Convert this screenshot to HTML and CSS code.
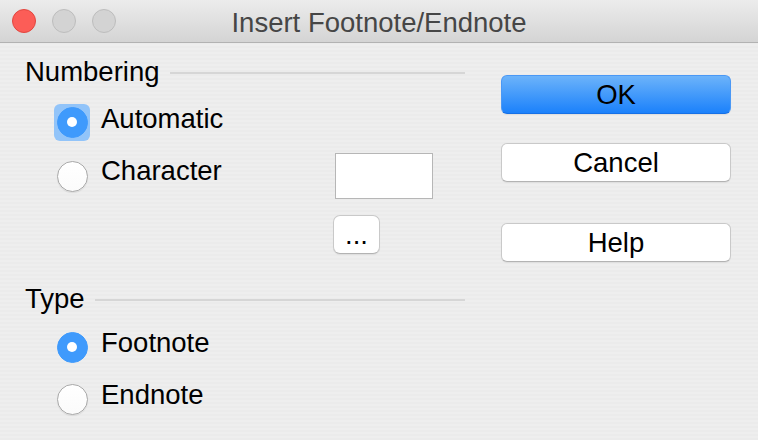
FILE: index.html
```html
<!DOCTYPE html>
<html>
<head>
<meta charset="utf-8">
<link rel="stylesheet" href="styles.css">
</head>
<body>
<div class="window">
  <div class="titlebar">
    <div class="lights">
      <span class="light close"></span>
      <span class="light"></span>
      <span class="light"></span>
    </div>
    <div class="title">Insert Footnote/Endnote</div>
    <div></div>
  </div>
  <div class="content">
    <div class="left">
      <div class="heading heading-numbering"><span>Numbering</span><span class="rule"></span></div>
      <div class="option opt-auto">
        <span class="ring focused"><span class="radio checked"></span></span>
        <span class="label">Automatic</span>
      </div>
      <div class="option opt-char">
        <span class="ring"><span class="radio"></span></span>
        <span class="label label-char">Character</span>
        <span class="charbox"></span>
      </div>
      <div class="dots-row"><button class="btn small">...</button></div>
      <div class="heading heading-type"><span>Type</span><span class="rule"></span></div>
      <div class="option opt-foot">
        <span class="ring"><span class="radio checked"></span></span>
        <span class="label">Footnote</span>
      </div>
      <div class="option opt-end">
        <span class="ring"><span class="radio"></span></span>
        <span class="label">Endnote</span>
      </div>
    </div>
    <div class="right">
      <button class="btn wide primary">OK</button>
      <button class="btn wide cancel">Cancel</button>
      <button class="btn wide help">Help</button>
    </div>
  </div>
</div>
</body>
</html>
```
FILE: styles.css
```css
html, body {
  margin: 0;
  padding: 0;
}
body {
  width: 758px;
  height: 440px;
  overflow: hidden;
  font-family: "Liberation Sans", Arial, sans-serif;
  font-size: 27.5px;
  color: #000;
}
.window {
  width: 758px;
  height: 440px;
  background: repeating-linear-gradient(to bottom, #eeeeee 0px, #eeeeee 2px, #ebebeb 2px, #ebebeb 4px);
}
.titlebar {
  height: 42px;
  border-bottom: 1px solid #b2b2b2;
  background: linear-gradient(to bottom, #ececec, #d4d4d4);
  display: grid;
  grid-template-columns: 1fr auto 1fr;
  align-items: center;
}
.lights {
  display: flex;
  gap: 16px;
  padding-left: 12px;
}
.light {
  width: 22px;
  height: 22px;
  border-radius: 50%;
  background: #d3d3d3;
  border: 1px solid #bdbdbd;
}
.light.close {
  background: #fc5d57;
  border-color: #e2463f;
}
.title {
  color: #464646;
  padding-top: 3px;
  line-height: 39px;
}
.content {
  display: flex;
}
.left {
  width: 440px;
  padding-left: 25px;
  padding-top: 13px;
  display: flex;
  flex-direction: column;
}
.heading {
  display: flex;
  align-items: center;
  height: 32px;
  line-height: 32px;
}
.heading .rule {
  flex: 1;
  height: 2px;
  background: #d6d6d6;
  margin-left: 10px;
  margin-top: 1px;
}
.heading-type {
  margin-top: 29px;
}
.option {
  display: flex;
  align-items: center;
  height: 36px;
}
.opt-auto { margin-top: 16px; }
.opt-char { margin-top: 13px; height: 46px; }
.opt-foot { margin-top: 14px; }
.opt-end { margin-top: 16px; }
.ring {
  width: 36px;
  height: 37px;
  margin-left: 29px;
  border-radius: 6px;
  display: flex;
  align-items: center;
  justify-content: center;
}
.ring.focused {
  background: #92c4f9;
}
.radio {
  width: 29px;
  height: 29px;
  border-radius: 50%;
  background: linear-gradient(to bottom, #ffffff, #fbfbfb);
  border: 1px solid #a9a9a9;
  box-shadow: 0 1px 1px rgba(0,0,0,0.08);
  display: flex;
  align-items: center;
  justify-content: center;
}
.radio.checked {
  background: #3f9afc;
  border-color: #3f9afc;
  box-shadow: none;
}
.radio.checked::after {
  content: "";
  width: 10px;
  height: 10px;
  border-radius: 50%;
  background: #fff;
}
.label {
  margin-left: 11px;
  padding-bottom: 8px;
}
.opt-auto .label {
  padding-bottom: 6px;
}
.label-char {
  width: 234px;
  padding-bottom: 10px;
}
.charbox {
  width: 96px;
  height: 44px;
  background: #fff;
  border: 1px solid #b6b6b6;
}
.dots-row {
  margin-top: 16px;
  padding-left: 308px;
}
.btn {
  font-family: "Liberation Sans", Arial, sans-serif;
  font-size: 27.5px;
  color: #000;
  background: #fff;
  border: 1px solid #c9c9c9;
  border-bottom-color: #b3b3b3;
  border-radius: 6px;
  box-shadow: 0 1px 1px rgba(0,0,0,0.06);
  padding: 0;
  display: flex;
  align-items: center;
  justify-content: center;
}
.btn.small {
  width: 47px;
  height: 39px;
  border-radius: 7px;
  line-height: 39px;
}
.right {
  padding-left: 36px;
  padding-top: 32px;
  display: flex;
  flex-direction: column;
}
.btn.wide {
  width: 230px;
  height: 39px;
  border-radius: 6px;
}
.btn.primary {
  background: linear-gradient(to bottom, #6cb3fa, #1b81fb);
  border-color: #4a98f5;
  border-bottom-color: #1570e6;
}
.btn.cancel { margin-top: 29px; }
.btn.help { margin-top: 41px; }
```
